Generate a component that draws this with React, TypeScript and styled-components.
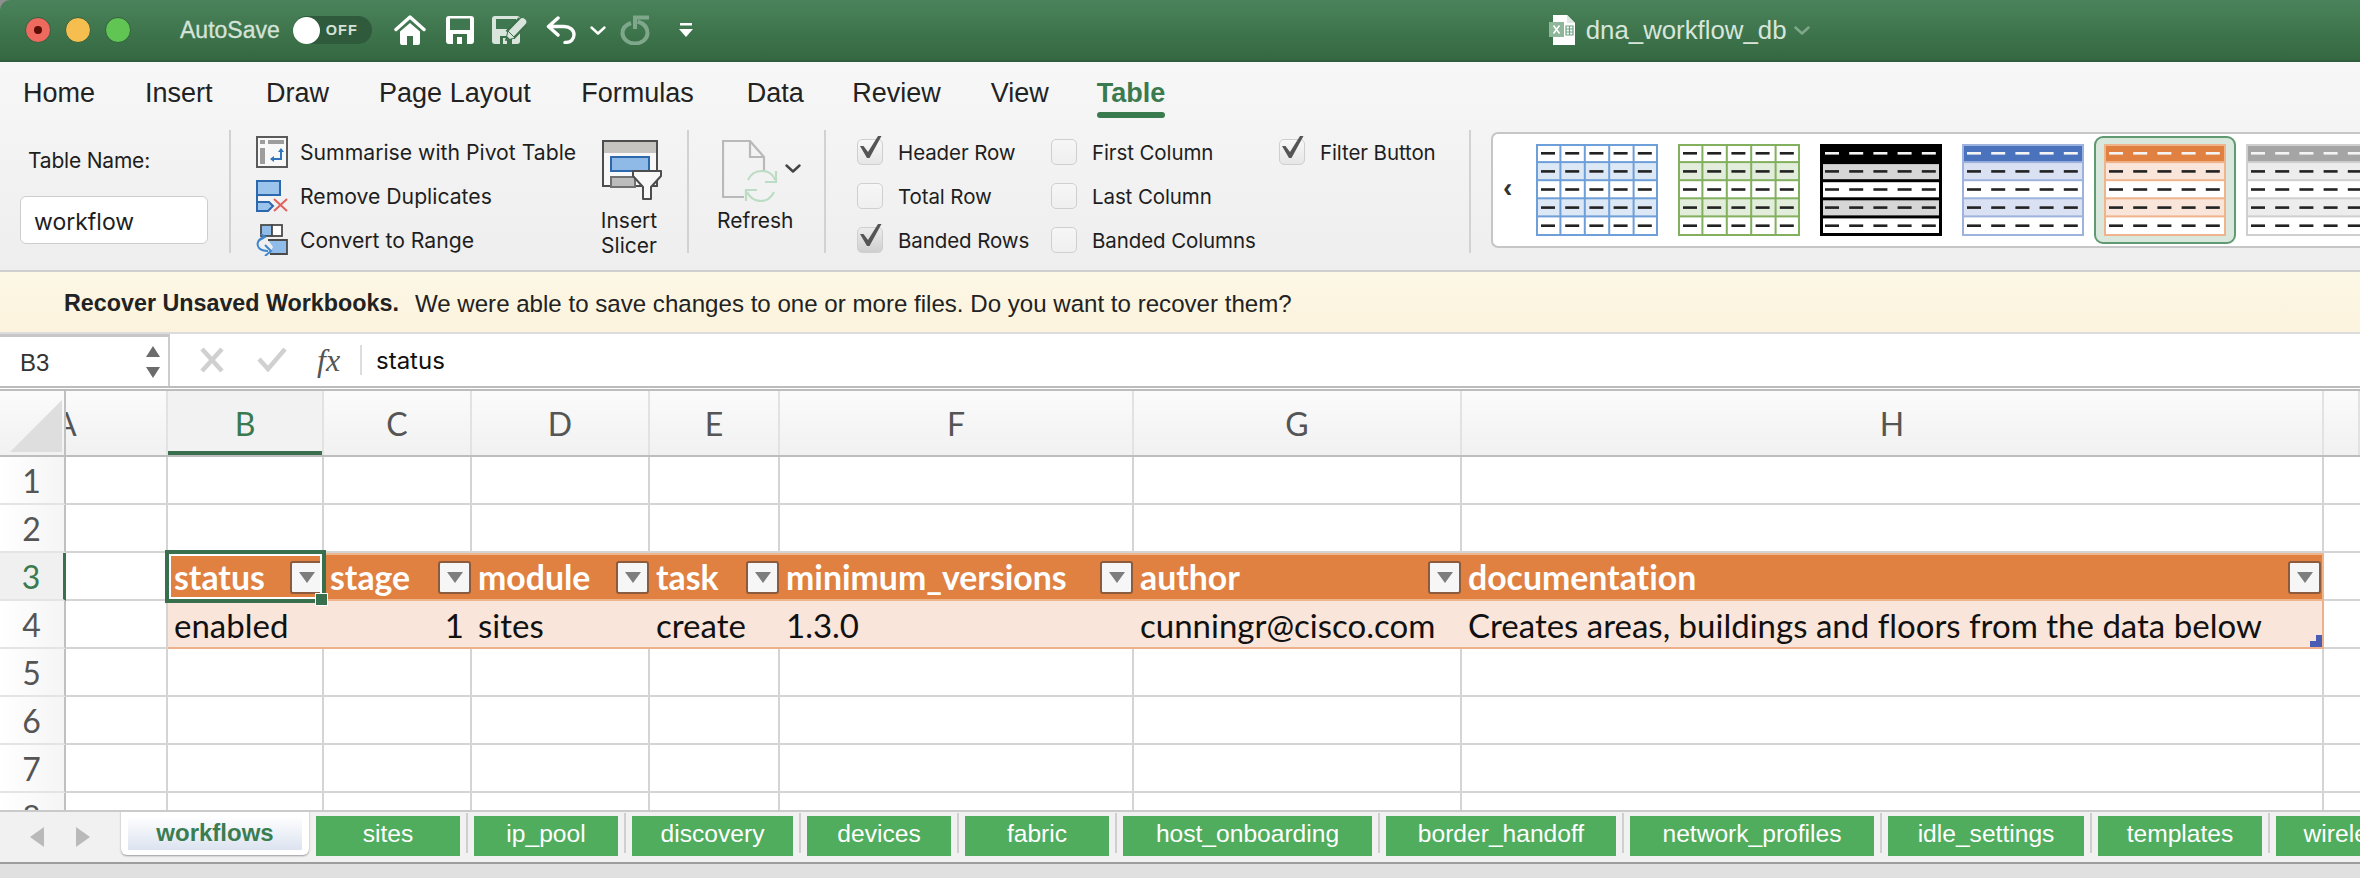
import type { ReactNode } from "react";
import styled, { createGlobalStyle } from "styled-components";

const GlobalStyle = createGlobalStyle`
  html, body {
    margin: 0;
    width: 2360px;
    height: 878px;
    overflow: hidden;
    background: #8f8f8f;
  }
`;

const UI = `Inter, "Liberation Sans", sans-serif`;
const ARIAL = `"Liberation Sans", Arial, sans-serif`;
const CELL = `Lato, "Open Sans", sans-serif`;

/* ---------- icons ---------- */

const HomeIcon = () => (
  <svg width="32" height="30" viewBox="0 0 32 30">
    <path d="M2 14.5 16 2l14 12.5" fill="none" stroke="#fff" strokeWidth="3.4" strokeLinecap="round" strokeLinejoin="round" />
    <path d="M6 16.5 16 8l10 8.500V28a2 2 0 0 1-2 2h-5v-9h-6v9H8a2 2 0 0 1-2-2z" fill="#fff" />
  </svg>
);

const SaveIcon = () => (
  <svg width="28" height="28" viewBox="0 0 28 28">
    <rect width="28" height="28" rx="3" fill="#fff" />
    <rect x="4" y="2.500" width="20" height="11.500" fill="#3f7751" />
    <rect x="7" y="18" width="14" height="10" fill="#3b7049" />
    <rect x="11" y="21" width="5" height="7" fill="#fff" />
  </svg>
);

const EditSaveIcon = () => (
  <svg width="36" height="28" viewBox="0 0 36 28">
    <rect width="28" height="28" rx="3" fill="#d9e5dc" />
    <rect x="4" y="3" width="20" height="10" fill="#3f7751" />
    <rect x="8" y="20" width="12" height="8" fill="#3b7049" />
    <rect x="11" y="22" width="4" height="6" fill="#d9e5dc" />
    <path d="M18 19 31 5.500" stroke="#3b7049" strokeWidth="12" />
    <path d="M18.500 18.500 30.500 6" stroke="#d9e5dc" strokeWidth="7.500" strokeLinecap="round" />
    <path d="M13.500 24.500 16 15l7 7z" fill="#d9e5dc" stroke="#3b7049" strokeWidth="1" />
    <path d="M13.500 24.500 14.800 20l3 3z" fill="#3b7049" />
  </svg>
);

const UndoIcon = () => (
  <svg width="30" height="28" viewBox="0 0 30 28">
    <path d="M12 2 2.500 10.500 12 19M3 10.500h15c6 0 10 3.500 10 8s-3 8-9 8" fill="none" stroke="#fff" strokeWidth="3.400" strokeLinecap="round" strokeLinejoin="round" />
  </svg>
);

const SmallChevron = ({ color = "#fff" }: { color?: string }) => (
  <svg width="16" height="9" viewBox="0 0 16 9">
    <path d="M1.500 1.500 8 7.500l6.500-6" fill="none" stroke={color} strokeWidth="2.400" strokeLinecap="round" strokeLinejoin="round" />
  </svg>
);

const RedoIcon = () => (
  <svg width="30" height="30" viewBox="0 0 30 30">
    <path d="M11 8C5.500 10 2.500 13.500 2.500 18a12.500 10.500 0 0 0 25 0c0-5.500-3.500-9.500-10-11.500" fill="none" stroke="#7ea78b" strokeWidth="4" />
    <path d="M29 2.500H15V14" fill="none" stroke="#7ea78b" strokeWidth="4" />
  </svg>
);

const CustomizeIcon = () => (
  <svg width="14" height="14" viewBox="0 0 14 14">
    <rect x="1" width="12" height="2.500" fill="#fff" />
    <path d="M0 6h14l-7 8z" fill="#fff" />
  </svg>
);

const FileIcon = () => (
  <svg width="26" height="30" viewBox="0 0 26 30">
    <path d="M4 0h14l8 8v22H4z" fill="#fff" />
    <path d="M18 0v8h8z" fill="#dfe8e2" />
    <rect y="7" width="15" height="15" fill="#8fb69b" />
    <path d="M4.500 10.500l6 8M10.500 10.500l-6 8" stroke="#fff" strokeWidth="1.500" />
    <path d="M17 11h7v9h-7zM17 14h7M17 17h7M20.500 11v9" fill="none" stroke="#6aa37d" strokeWidth="1.200" />
  </svg>
);

const PivotIcon = () => (
  <svg width="32" height="32" viewBox="0 0 32 32">
    <rect x="1" y="1" width="30" height="30" fill="#f8f8f8" stroke="#5a5a5a" strokeWidth="2" />
    <rect x="4" y="4" width="5" height="4" fill="#9d9d9d" />
    <rect x="12" y="4" width="16" height="4" fill="#9d9d9d" />
    <rect x="4" y="12" width="5" height="16" fill="#9d9d9d" />
    <path d="M25 13v10H15" fill="none" stroke="#2f74bd" strokeWidth="2" />
    <path d="M22 16l3-4 3 4zM18 20l-4 3 4 3z" fill="#2f74bd" />
  </svg>
);

const DuplicatesIcon = () => (
  <svg width="32" height="32" viewBox="0 0 32 32">
    <path d="M1 1h23v14H1z" fill="#9ac4ec" stroke="#2c68ae" strokeWidth="2" />
    <path d="M1 15v16h10l7-8-4-6H1z" fill="#f5f5f5" />
    <path d="M1 22h12l4 4-5 5H1z" fill="#9ac4ec" stroke="#2c68ae" strokeWidth="2" />
    <path d="M1 15v16" stroke="#2c68ae" strokeWidth="2" />
    <path d="M18 19l13 12M31 19 18 31" stroke="#e0625c" strokeWidth="2" />
  </svg>
);

const ConvertIcon = () => (
  <svg width="32" height="32" viewBox="0 0 32 32">
    <rect x="5" y="1" width="11" height="11" fill="#8fbce8" stroke="#4a4a4a" strokeWidth="1.800" />
    <rect x="16" y="1" width="10" height="11" fill="#fff" stroke="#4a4a4a" strokeWidth="1.800" />
    <path d="M12 16h19v14H13l4-7z" fill="#8fbce8" />
    <path d="M12 16h19v14H14" fill="none" stroke="#4a4a4a" strokeWidth="1.800" />
    <path d="M8 13C2 15 0 20 3 24c2 2 5 3 9 3" fill="none" stroke="#3f86cc" strokeWidth="2" />
    <path d="M9 21l6 6-6 5M5 10l4 3-5 3" fill="none" stroke="#3f86cc" strokeWidth="2" />
  </svg>
);

const SlicerIcon = () => (
  <svg width="60" height="60" viewBox="0 0 60 60">
    <rect x="1" y="1" width="54" height="45" fill="#f8f8f8" stroke="#4d4d4d" strokeWidth="2" />
    <rect x="2" y="2" width="52" height="11" fill="#c6c4c0" />
    <rect x="9" y="17" width="38" height="14" fill="#8fbae8" stroke="#2d68ad" strokeWidth="2" />
    <rect x="9" y="37" width="24" height="10" fill="#bcbcbc" stroke="#707070" strokeWidth="2" />
    <path d="M31 31h28v5L49 47v12h-8V47L31 36z" fill="#f8f8f8" stroke="#4d4d4d" strokeWidth="2" strokeLinejoin="round" />
  </svg>
);

const RefreshIcon = () => (
  <svg width="56" height="62" viewBox="0 0 56 62">
    <path d="M22 57H1V1h27l14 16v14M28 1v16h14" fill="none" stroke="#b9b9b9" strokeWidth="2.200" />
    <circle cx="39" cy="46" r="15" fill="#f2f2f2" />
    <path d="M26 40c3-7 9-9 14-9 6 0 11 3 13 9M52 52c-3 6-8 9-13 9-6 0-11-3-14-9" fill="none" stroke="#bcdcc4" strokeWidth="2.200" />
    <path d="M54 31v11H43M24 61V50h11" fill="none" stroke="#bcdcc4" strokeWidth="2.200" />
  </svg>
);

const CheckMark = () => (
  <svg width="24" height="24" viewBox="0 0 24 24">
    <path d="M1 11h3.500L9 17 19 1h3.500L10.500 23H8z" fill="#555" />
  </svg>
);

const CancelGlyph = () => (
  <svg width="24" height="26" viewBox="0 0 24 26">
    <path d="M2 2l20 22M22 2 2 24" stroke="#d0d0d0" strokeWidth="4.500" />
  </svg>
);

const EnterGlyph = () => (
  <svg width="30" height="24" viewBox="0 0 30 24">
    <path d="M2 11l9 10L28 1" fill="none" stroke="#d0d0d0" strokeWidth="4.500" />
  </svg>
);

type ThumbProps = {
  border: string;
  band: string;
  head?: string;
  borderWidth?: number;
  columns?: boolean;
};

const rowsOf = [0, 1, 2, 3, 4];

const StyleThumb = ({ border, band, head, borderWidth = 2, columns }: ThumbProps) => (
  <svg width="122" height="92" viewBox="0 0 122 92">
    <rect width="122" height="92" fill="#fff" />
    {rowsOf.map((r) => (
      <rect
        key={r}
        x="0"
        y={r * 18.2}
        width="122"
        height="18.400"
        fill={r === 0 && head ? head : r % 2 === 1 ? band : "#fff"}
      />
    ))}
    {[1, 2, 3, 4].map((r) => (
      <rect key={r} x="0" y={r * 18.1 - 1} width="122" height={borderWidth} fill={border} />
    ))}
    {columns &&
      [1, 2, 3, 4].map((c) => <rect key={c} x={c * 24.4 - 1} y="0" width="2" height="92" fill={border} />)}
    {rowsOf.map((r) =>
      rowsOf.map((c) => (
        <rect
          key={c}
          x={5 + c * 24.2}
          y={8 + r * 18.1}
          width="14"
          height="2.600"
          fill={r === 0 && head ? "#f4f4f4" : "#222"}
        />
      ))
    )}
    <rect
      x={borderWidth / 2}
      y={borderWidth / 2}
      width={122 - borderWidth}
      height={92 - borderWidth}
      fill="none"
      stroke={border}
      strokeWidth={borderWidth}
    />
  </svg>
);

/* ---------- data ---------- */

const tabs = [
  { label: "Home", gap: 0 },
  { label: "Insert", gap: 50 },
  { label: "Draw", gap: 53.5 },
  { label: "Page Layout", gap: 50 },
  { label: "Formulas", gap: 50.5 },
  { label: "Data", gap: 53 },
  { label: "Review", gap: 48.5 },
  { label: "View", gap: 50 },
  { label: "Table", gap: 48, active: true },
];

const thumbs: (ThumbProps & { selected?: boolean })[] = [
  { border: "#6f9fd8", band: "#dce8f5", columns: true },
  { border: "#82b05f", band: "#e2eedb", columns: true },
  { border: "#000", band: "#d6d6d6", head: "#000", borderWidth: 3 },
  { border: "#9db2dc", band: "#d9e1f2", head: "#4a72bd" },
  { border: "#f0b48c", band: "#f9e5d9", head: "#e08142", selected: true },
  { border: "#cfcfcf", band: "#ededed", head: "#a5a5a5" },
];

const columnWidths = [102, 156, 148, 178, 130, 354, 328, 862, 36];
const columnNames = ["A", "B", "C", "D", "E", "F", "G", "H", ""];

const headers = ["status", "stage", "module", "task", "minimum_versions", "author", "documentation"];
const values = [
  "enabled",
  "1",
  "sites",
  "create",
  "1.3.0",
  "cunningr@cisco.com",
  "Creates areas, buildings and floors from the data below",
];

const sheetTabs = [
  { label: "sites", width: 144 },
  { label: "ip_pool", width: 144 },
  { label: "discovery", width: 161 },
  { label: "devices", width: 144 },
  { label: "fabric", width: 144 },
  { label: "host_onboarding", width: 249 },
  { label: "border_handoff", width: 230 },
  { label: "network_profiles", width: 244 },
  { label: "idle_settings", width: 196 },
  { label: "templates", width: 164 },
  { label: "wireless", width: 144 },
];

/* ---------- page ---------- */

export default function App() {
  return (
    <Window>
      <GlobalStyle />
      <TitleBar>
        <Lights>
          <Light $color="#ee6a5f">
            <LightDot />
          </Light>
          <Light $color="#f6bd4f" />
          <Light $color="#61c554" />
        </Lights>
        <AutoSave>AutoSave</AutoSave>
        <Toggle>
          <ToggleKnob />
          <ToggleText>OFF</ToggleText>
        </Toggle>
        <QuickSlot $gap={22}>
          <HomeIcon />
        </QuickSlot>
        <QuickSlot $gap={20}>
          <SaveIcon />
        </QuickSlot>
        <QuickSlot $gap={18}>
          <EditSaveIcon />
        </QuickSlot>
        <QuickSlot $gap={18}>
          <UndoIcon />
        </QuickSlot>
        <QuickSlot $gap={14}>
          <SmallChevron />
        </QuickSlot>
        <QuickSlot $gap={14}>
          <RedoIcon />
        </QuickSlot>
        <QuickSlot $gap={29}>
          <CustomizeIcon />
        </QuickSlot>
        <DocTitle>
          <FileIcon />
          <DocName>dna_workflow_db</DocName>
          <SmallChevron color="#7fa98c" />
        </DocTitle>
      </TitleBar>

      <Ribbon>
        <TabRow>
          {tabs.map((t) => (
            <RibbonTab key={t.label} $gap={t.gap} $active={t.active}>
              {t.label}
            </RibbonTab>
          ))}
        </TabRow>
        <Groups>
          <NameGroup>
            <NameLabel>Table Name:</NameLabel>
            <NameInput>workflow</NameInput>
          </NameGroup>
          <Separator />
          <ToolsGroup>
            <CommandList>
              <Command>
                <PivotIcon />
                Summarise with Pivot Table
              </Command>
              <Command>
                <DuplicatesIcon />
                Remove Duplicates
              </Command>
              <Command>
                <ConvertIcon />
                Convert to Range
              </Command>
            </CommandList>
            <BigButton>
              <SlicerIcon />
              <BigLabel>
                Insert
                <br />
                Slicer
              </BigLabel>
            </BigButton>
          </ToolsGroup>
          <Separator />
          <RefreshGroup>
            <RefreshTop>
              <RefreshIcon />
              <RefreshChevron>
                <SmallChevron color="#444" />
              </RefreshChevron>
            </RefreshTop>
            <RefreshLabel>Refresh</RefreshLabel>
          </RefreshGroup>
          <Separator />
          <OptionsGroup>
            <Option $checked>Header Row</Option>
            <Option>First Column</Option>
            <Option $checked>Filter Button</Option>
            <Option>Total Row</Option>
            <Option>Last Column</Option>
            <span />
            <Option $checked $pressed>
              Banded Rows
            </Option>
            <Option>Banded Columns</Option>
          </OptionsGroup>
          <Separator />
          <Gallery>
            <GalleryBack>‹</GalleryBack>
            {thumbs.map((t, i) => (
              <ThumbSlot key={i} $selected={t.selected}>
                <StyleThumb {...t} />
              </ThumbSlot>
            ))}
          </Gallery>
        </Groups>
      </Ribbon>

      <MessageBar>
        <MessageTitle>Recover Unsaved Workbooks.</MessageTitle>
        <MessageText>We were able to save changes to one or more files. Do you want to recover them?</MessageText>
      </MessageBar>

      <FormulaBar>
        <NameBox>
          B3
          <Spinner>
            <SpinUp />
            <SpinDown />
          </Spinner>
        </NameBox>
        <FormulaTools>
          <CancelGlyph />
          <EnterGlyph />
          <FxLabel>fx</FxLabel>
        </FormulaTools>
        <FormulaValue>status</FormulaValue>
      </FormulaBar>

      <Sheet>
        <ColumnHeader>
          <Corner>
            <CornerTriangle />
          </Corner>
          {columnNames.map((name, i) => (
            <ColumnCell key={i} $width={columnWidths[i]} $active={name === "B"} $clip={name === "A"}>
              {name}
            </ColumnCell>
          ))}
        </ColumnHeader>

        {[1, 2, 3, 4, 5, 6, 7, 8].map((row) => (
          <Row key={row}>
            <RowNumber $active={row === 3}>{row}</RowNumber>
            {columnWidths.map((w, i) => {
              const col = i - 1;
              const inTable = col >= 0 && col < headers.length;
              if (row === 3 && inTable) {
                return (
                  <HeaderCell key={i} $width={w} $last={col === headers.length - 1}>
                    {headers[col]}
                    <FilterButton>
                      <FilterArrow />
                    </FilterButton>
                  </HeaderCell>
                );
              }
              if (row === 4 && inTable) {
                return (
                  <BandCell key={i} $width={w} $numeric={col === 1} $last={col === headers.length - 1}>
                    {values[col]}
                    {col === headers.length - 1 && <ResizeCorner />}
                  </BandCell>
                );
              }
              return <Cell key={i} $width={w} $last={i === columnWidths.length - 1} />;
            })}
          </Row>
        ))}

        <Selection>
          <SelectionHandle />
        </Selection>
      </Sheet>

      <TabBar>
        <TabArrows>
          <ArrowLeft />
          <ArrowRight />
        </TabArrows>
        <ActiveSheet>
          <ActiveSheetInner>workflows</ActiveSheetInner>
        </ActiveSheet>
        {sheetTabs.map((t) => (
          <SheetSlot key={t.label}>
            <SheetTab $width={t.width}>{t.label}</SheetTab>
          </SheetSlot>
        ))}
      </TabBar>
      <StatusBar />
    </Window>
  );
}

/* ---------- title bar ---------- */

const Window = styled.div`
  width: 2360px;
  height: 878px;
  display: flex;
  flex-direction: column;
  overflow: hidden;
  font-family: ${UI};
  color: #1e1e1e;
`;

const TitleBar = styled.div`
  flex: none;
  height: 62px;
  box-sizing: border-box;
  display: flex;
  align-items: center;
  padding-left: 25px;
  background: linear-gradient(#4a835b, #346840);
  border-bottom: 2px solid #2f5c3b;
  border-top-left-radius: 10px;
`;

const Lights = styled.div`
  display: flex;
  gap: 14px;
`;

const Light = styled.div<{ $color: string }>`
  width: 26px;
  height: 26px;
  box-sizing: border-box;
  border-radius: 50%;
  background: ${(p) => p.$color};
  border: 1.5px solid #32603f;
  display: flex;
  align-items: center;
  justify-content: center;
`;

const LightDot = styled.div`
  width: 8px;
  height: 8px;
  border-radius: 50%;
  background: #5c0d08;
`;

const AutoSave = styled.span`
  margin-left: 49px;
  font: 400 23px ${ARIAL};
  -webkit-text-stroke: 0.3px #d6e3d9;
  color: #d6e3d9;
`;

const Toggle = styled.div`
  margin-left: 13px;
  width: 79px;
  height: 28px;
  border-radius: 14px;
  background: #2f5a3c;
  display: flex;
  align-items: center;
`;

const ToggleKnob = styled.div`
  width: 27px;
  height: 27px;
  border-radius: 50%;
  background: #fff;
`;

const ToggleText = styled.span`
  margin-left: 6px;
  font: 700 14.5px ${ARIAL};
  letter-spacing: 1px;
  color: #d5e2d9;
`;

const QuickSlot = styled.div<{ $gap: number }>`
  flex: none;
  display: flex;
  margin-left: ${(p) => p.$gap}px;
`;

const DocTitle = styled.div`
  margin-left: 856px;
  display: flex;
  align-items: center;
  gap: 11px;
`;

const DocName = styled.span`
  font: 25.800px ${ARIAL};
  color: #d8e5db;
  margin-right: -4px;
`;

/* ---------- ribbon ---------- */

const Ribbon = styled.div`
  flex: none;
  height: 208px;
  box-sizing: border-box;
  background: linear-gradient(#f7f7f7, #eeeeee);
`;

const TabRow = styled.div`
  height: 68px;
  box-sizing: border-box;
  padding: 14px 0 0 23px;
  display: flex;
`;

const RibbonTab = styled.div<{ $gap: number; $active?: boolean }>`
  position: relative;
  margin-left: ${(p) => p.$gap}px;
  height: 34px;
  font: ${(p) => (p.$active ? 700 : 400)} 27px ${ARIAL};
  line-height: 34px;
  color: ${(p) => (p.$active ? "#3a7a4f" : "#222")};

  ${(p) =>
    p.$active &&
    `&::after {
      content: "";
      position: absolute;
      left: 0;
      right: 0;
      top: 36px;
      height: 6px;
      border-radius: 3px;
      background: #3a7a4f;
    }`}
`;

const Groups = styled.div`
  height: 123px;
  display: flex;
  overflow: visible;
`;

const Separator = styled.div`
  flex: none;
  width: 2px;
  background: #d2d2d2;
`;

const NameGroup = styled.div`
  flex: none;
  width: 229px;
  box-sizing: border-box;
  padding: 19px 0 0 20px;
`;

const NameLabel = styled.div`
  padding-left: 8px;
  font: 21px/24px ${UI};
  letter-spacing: -0.2px;
`;

const NameInput = styled.div`
  margin-top: 23px;
  width: 188px;
  height: 48px;
  box-sizing: border-box;
  padding-left: 13px;
  background: #fff;
  border: 1.5px solid #cdcdcd;
  border-radius: 6px;
  font: 23px/50px ${UI};
`;

const ToolsGroup = styled.div`
  flex: none;
  width: 456px;
  box-sizing: border-box;
  padding: 6px 0 0 25px;
  display: flex;
  align-items: flex-start;
`;

const CommandList = styled.div`
  flex: none;
  width: 346px;
  display: flex;
  flex-direction: column;
  gap: 12px;
`;

const Command = styled.div`
  height: 32px;
  display: flex;
  align-items: center;
  gap: 12px;
  font: 21.200px ${UI};
  white-space: nowrap;

  svg {
    flex: none;
  }
`;

const BigButton = styled.div`
  flex: none;
  width: 60px;
  margin-top: 4px;
  display: flex;
  flex-direction: column;
  align-items: center;

  svg {
    flex: none;
  }
`;

const BigLabel = styled.div`
  margin: 8px 6px 0 0;
  width: 60px;
  text-align: center;
  font: 21px/25px ${UI};
`;

const RefreshGroup = styled.div`
  flex: none;
  width: 135px;
  box-sizing: border-box;
  padding: 10px 0 0 33px;
`;

const RefreshTop = styled.div`
  display: flex;
  align-items: flex-start;
  height: 69px;

  svg {
    flex: none;
  }
`;

const RefreshChevron = styled.div`
  display: flex;
  margin: 24px 0 0 7px;
`;

const RefreshLabel = styled.div`
  font: 21px/24px ${UI};
  margin-left: -5px;
`;

const OptionsGroup = styled.div`
  flex: none;
  width: 643px;
  box-sizing: border-box;
  padding: 6px 0 0 31px;
  display: grid;
  grid-template-columns: 194px 228px 1fr;
  grid-auto-rows: 44px;
`;

const Box = styled.span<{ $checked?: boolean; $pressed?: boolean }>`
  position: relative;
  flex: none;
  width: 26px;
  height: 26px;
  box-sizing: border-box;
  border: 1.5px solid #cfcfcf;
  border-radius: 5px;
  background: ${(p) =>
    p.$pressed
      ? "linear-gradient(#ececec, #cfcfcf)"
      : p.$checked
        ? "linear-gradient(#f8f8f8, #e6e6e6)"
        : "linear-gradient(#f6f6f6, #efefef)"};

  svg {
    position: absolute;
    left: 1px;
    top: -5px;
  }
`;

const OptionRow = styled.label`
  height: 32px;
  display: flex;
  align-items: center;
  gap: 15px;
  font: 20.500px ${UI};
  letter-spacing: -0.1px;
  white-space: nowrap;
`;

const Option = ({
  children,
  $checked,
  $pressed,
}: {
  children: ReactNode;
  $checked?: boolean;
  $pressed?: boolean;
}) => (
  <OptionRow>
    <Box $checked={$checked} $pressed={$pressed}>
      {$checked && <CheckMark />}
    </Box>
    {children}
  </OptionRow>
);

const Gallery = styled.div`
  flex: none;
  margin: 2px 0 0 20px;
  width: 880px;
  height: 116px;
  box-sizing: border-box;
  padding: 10px 0 0 10px;
  display: flex;
  gap: 20px;
  background: #fff;
  border: 2px solid #c6c6c6;
  border-right: 0;
  border-top-left-radius: 7px;
  border-bottom-left-radius: 7px;
`;

const GalleryBack = styled.span`
  width: 5px;
  margin-right: 8px;
  font: 700 28px/88px ${ARIAL};
  color: #333;
`;

const ThumbSlot = styled.div<{ $selected?: boolean }>`
  position: relative;
  flex: none;
  width: 122px;
  height: 92px;

  svg {
    position: relative;
    display: block;
  }

  ${(p) =>
    p.$selected &&
    `&::before {
      content: "";
      position: absolute;
      inset: -8px -10px;
      border: 2.5px solid #5f9a72;
      border-radius: 9px;
      background: #d9e7dc;
    }`}
`;

/* ---------- message + formula bar ---------- */

const MessageBar = styled.div`
  flex: none;
  height: 64px;
  box-sizing: border-box;
  padding: 3px 0 0 64px;
  display: flex;
  align-items: center;
  background: linear-gradient(#fdf7e6, #fbf3dd);
  border-top: 2px solid #cfcfcf;
  border-bottom: 2px solid #dcdcdc;
  color: #222;
`;

const MessageTitle = styled.b`
  font: 700 23.300px ${ARIAL};
`;

const MessageText = styled.span`
  margin-left: 16px;
  font: 24.100px ${ARIAL};
`;

const FormulaBar = styled.div`
  flex: none;
  height: 57px;
  box-sizing: border-box;
  display: flex;
  align-items: center;
  background: #fff;
  border-bottom: 5px double #bcbcbc;
`;

const NameBox = styled.div`
  position: relative;
  flex: none;
  align-self: stretch;
  width: 170px;
  box-sizing: border-box;
  padding-left: 20px;
  border-top: 3px solid #c6c6c6;
  border-right: 2.500px solid #cccccc;
  font: 24px/52px ${ARIAL};
  color: #333;
`;

const Spinner = styled.div`
  position: absolute;
  right: 8px;
  top: 9px;
  display: flex;
  flex-direction: column;
  gap: 10px;
`;

const SpinUp = styled.div`
  width: 0;
  height: 0;
  border: 7.500px solid transparent;
  border-top: 0;
  border-bottom: 11px solid #6b6b6b;
`;

const SpinDown = styled.div`
  width: 0;
  height: 0;
  border: 7.500px solid transparent;
  border-bottom: 0;
  border-top: 11px solid #6b6b6b;
`;

const FormulaTools = styled.div`
  flex: none;
  width: 191px;
  height: 30px;
  box-sizing: border-box;
  padding-left: 29px;
  margin-left: 1px;
  display: flex;
  align-items: center;
  gap: 33px;
  border-right: 2px solid #dddddd;
`;

const FxLabel = styled.i`
  margin-left: -3px;
  font: italic 32px "Liberation Serif", serif;
  color: #555;
`;

const FormulaValue = styled.div`
  margin-left: 14px;
  font: 24px ${UI};
  color: #111;
`;

/* ---------- sheet ---------- */

const LINE = "#d4d4d4";

const Sheet = styled.div`
  position: relative;
  flex: none;
  height: 419px;
  overflow: hidden;
  background: #fff;
  font-family: ${CELL};
  font-variant-ligatures: none;
`;

const ColumnHeader = styled.div`
  height: 66px;
  box-sizing: border-box;
  display: flex;
  background: linear-gradient(#fbfbfb, #f1f1f1);
  border-bottom: 2.500px solid #bdbdbd;
`;

const Corner = styled.div`
  position: relative;
  flex: none;
  width: 66px;
  box-sizing: border-box;
  border-right: 2px solid #c0c0c0;
`;

const CornerTriangle = styled.div`
  position: absolute;
  left: 10px;
  top: 9px;
  width: 0;
  height: 0;
  border-left: 52px solid transparent;
  border-bottom: 52px solid #dedede;
`;

const ColumnCell = styled.div<{ $width: number; $active?: boolean; $clip?: boolean }>`
  flex: none;
  position: relative;
  width: ${(p) => p.$width}px;
  box-sizing: border-box;
  overflow: hidden;
  display: flex;
  align-items: center;
  justify-content: center;
  border-right: 2px solid #e2e2e2;
  background: ${(p) => (p.$active ? "#f2f2f2" : "transparent")};
  box-shadow: ${(p) => (p.$active ? "inset 0 -4px 0 #3a704e" : "none")};
  font-size: 32px;
  color: ${(p) => (p.$active ? "#3a7a4f" : "#555")};
  ${(p) => p.$clip && "justify-content: flex-start; text-indent: -11px;"}
`;

const Row = styled.div`
  height: 48px;
  display: flex;
`;

const RowNumber = styled.div<{ $active?: boolean }>`
  flex: none;
  width: 66px;
  box-sizing: border-box;
  display: flex;
  align-items: center;
  justify-content: center;
  padding-right: 1px;
  font-size: 32px;
  color: ${(p) => (p.$active ? "#3a7a4f" : "#555")};
  background: ${(p) => (p.$active ? "#f0f0f0" : "linear-gradient(90deg, #ffffff, #f5f5f5)")};
  border-right: ${(p) => (p.$active ? "3px solid #3a704e" : "2px solid #c0c0c0")};
  border-bottom: 2px solid #e4e4e4;
`;

const Cell = styled.div<{ $width: number; $last?: boolean }>`
  flex: none;
  width: ${(p) => p.$width}px;
  box-sizing: border-box;
  border-right: ${(p) => (p.$last ? "0" : `2px solid ${LINE}`)};
  border-bottom: 2px solid ${LINE};
`;

const HeaderCell = styled.div<{ $width: number; $last?: boolean }>`
  flex: none;
  width: ${(p) => p.$width}px;
  box-sizing: border-box;
  padding: 0 1px 0 6px;
  display: flex;
  align-items: center;
  justify-content: space-between;
  background: #e08142;
  border-top: 2px solid #eeb48a;
  border-bottom: 2px solid #eeb48a;
  border-right: ${(p) => (p.$last ? "2px solid #eeb48a" : "0")};
  font-size: 33.800px;
  font-weight: 700;
  color: #fff;
  white-space: nowrap;
`;

const BandCell = styled.div<{ $width: number; $numeric?: boolean; $last?: boolean }>`
  position: relative;
  flex: none;
  width: ${(p) => p.$width}px;
  box-sizing: border-box;
  padding: 2px 8px 0 6px;
  display: flex;
  align-items: center;
  justify-content: ${(p) => (p.$numeric ? "flex-end" : "flex-start")};
  background: #f9e5d9;
  border-bottom: 2px solid #eeb08a;
  border-right: ${(p) => (p.$last ? "2px solid #eeb08a" : "0")};
  font-size: 33px;
  color: #111;
  white-space: nowrap;
`;

const FilterButton = styled.div`
  flex: none;
  width: 33px;
  height: 33px;
  box-sizing: border-box;
  display: flex;
  align-items: center;
  justify-content: center;
  background: #f6f6f6;
  border: 2px solid #8c5a3c;
  border-radius: 3px;
`;

const FilterArrow = styled.div`
  width: 0;
  height: 0;
  border: 8.500px solid transparent;
  border-bottom: 0;
  border-top: 11px solid #7d7d7d;
`;

const ResizeCorner = styled.div`
  position: absolute;
  right: 0;
  bottom: 0;
  width: 12px;
  height: 12px;
  background: #4a5db5;
  clip-path: polygon(50% 0, 100% 0, 100% 100%, 0 100%, 0 50%, 50% 50%);
`;

const Selection = styled.div`
  position: absolute;
  left: 165px;
  top: 159px;
  width: 161px;
  height: 53px;
  box-sizing: border-box;
  border: 4px solid #386f4c;
  box-shadow: inset 0 0 0 2px #fff;
`;

const SelectionHandle = styled.div`
  position: absolute;
  right: -6px;
  bottom: -7px;
  width: 11px;
  height: 11px;
  background: #386f4c;
  border: 1px solid #fff;
`;

/* ---------- sheet tabs ---------- */

const TabBar = styled.div`
  flex: none;
  height: 54px;
  box-sizing: border-box;
  display: flex;
  overflow: hidden;
  background: #f1f1f1;
  border-top: 2px solid #cacaca;
  border-bottom: 2px solid #9d9d9d;
`;

const TabArrows = styled.div`
  flex: none;
  width: 121px;
  box-sizing: border-box;
  padding: 15px 0 0 30px;
  display: flex;
  gap: 32px;
`;

const ArrowLeft = styled.div`
  width: 0;
  height: 0;
  border: 10px solid transparent;
  border-left: 0;
  border-right: 14px solid #b9b9b9;
`;

const ArrowRight = styled.div`
  width: 0;
  height: 0;
  border: 10px solid transparent;
  border-right: 0;
  border-left: 14px solid #b9b9b9;
`;

const ActiveSheet = styled.div`
  flex: none;
  width: 188px;
  height: 45px;
  margin-top: -2px;
  box-sizing: border-box;
  padding: 6px 7px 0;
  background: #fff;
  border-radius: 0 0 6px 6px;
  box-shadow: 0 1px 2px #9a9a9a;
`;

const ActiveSheetInner = styled.div`
  height: 34px;
  text-align: center;
  background: linear-gradient(#ffffff, #dce3f0);
  font: 700 24px/34px ${ARIAL};
  color: #3a7d50;
`;

const SheetSlot = styled.div`
  flex: none;
  display: flex;
  padding: 4px 7px 0;
  position: relative;

  &::after {
    content: "";
    position: absolute;
    right: -1px;
    top: 1px;
    width: 2px;
    height: 40px;
    background: #cfcfcf;
  }
`;

const SheetTab = styled.div<{ $width: number }>`
  width: ${(p) => p.$width}px;
  height: 40px;
  text-align: center;
  background: #50ad5e;
  font: 24.600px/36px ${ARIAL};
  color: #fff;
  white-space: nowrap;
`;

const StatusBar = styled.div`
  flex: 1;
  background: #e0e0e0;
`;
